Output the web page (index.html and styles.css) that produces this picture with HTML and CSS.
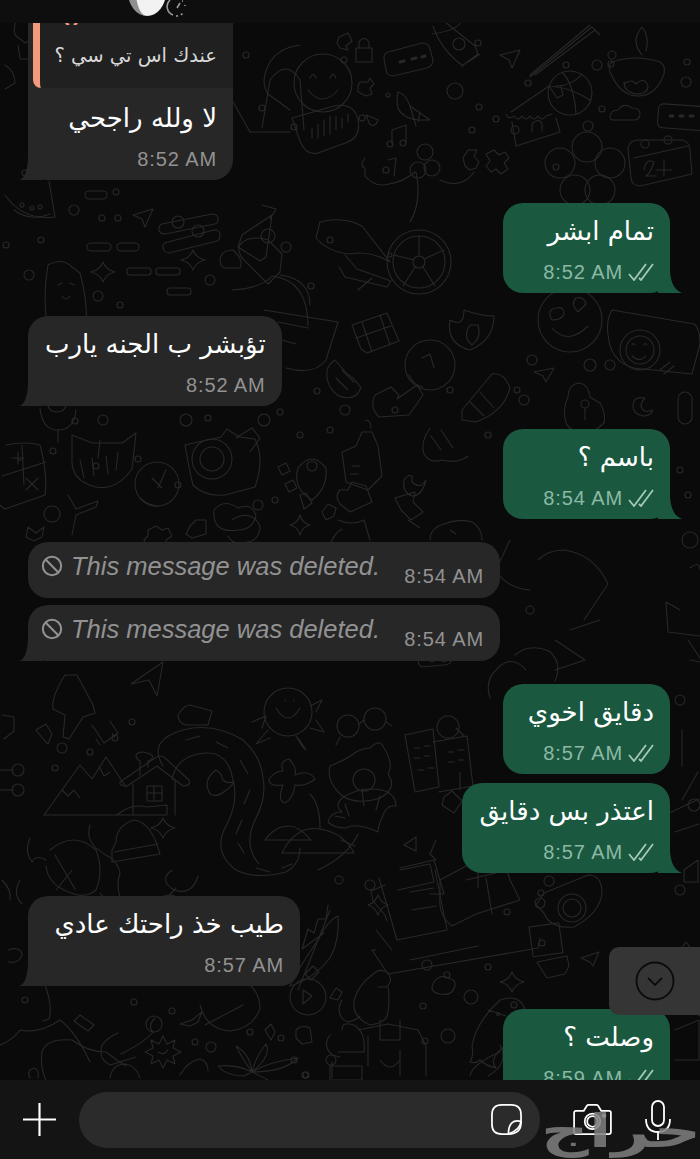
FILE: index.html
```html
<!DOCTYPE html>
<html lang="en">
<head>
    <meta charset="UTF-8">
    <meta name="viewport" content="width=device-width, initial-scale=1.0">
    <title>Chat</title>
    <link rel="stylesheet" href="styles.css">
</head>
<body>
<div class="screen">
    <svg class="wallpaper" viewBox="0 0 700 1159" aria-hidden="true">
        <!-- top row -->
        <circle cx="323" cy="83" r="29"/><path d="M310 78q3-7 6 0M330 78q3-7 6 0M308 90q14 18 30 0"/>
        <path d="M300 45q-32 4-36 35 0 8 4 14l22 16M232 100l18 32h40M262 128l8-48q16-22 30 0l4 50"/>
        <path d="M292 118l42-12q20-4 24 14 3 16-10 22l-30 11q-12 3-18-12z"/><path d="M312 138v-10M318 138v-14M324 136v-16M330 134v-18M336 130v-14M342 128v-10M348 122v-8"/>
        <path d="M340 48l8 2-2-4 6-5-4-8-9 4-2 6zM356 48h16v14l-16 0zM359 48v-6q5-7 10 0v6"/>
        <path d="M388 52l34-9q7 0 8 6l3 11q0 6-6 8l-34 8q-6 0-7-6l-2-11q0-6 4-7z"/><path d="M400 62l4-1M412 59l4-1M422 57l3-1" stroke-width="3"/>
        <path d="M432 34q30-4 32-18M433 26q8 24 30 40M462 66l16-12 -3-8-30-24M468 62l12-8"/><circle cx="459" cy="44" r="6"/>
        <path d="M500 55l20-5-8 18-3-8z"/><path d="M530 75l60-50M535 75l60-45M600 35l-8-8-62 50"/>
        <path d="M612 62q24-8 48 0 6 4 4 12-8 22-26 22-18 0-28-24-2-6 2-10z"/><path d="M642 55q-12-14 0-28 8 10 4 24M624 84q8-6 12 0 8-8 12 2 0 8-12 8-12-2-12-12z"/>
        <circle cx="570" cy="93" r="22"/><path d="M550 86q22 2 40 14M562 72q12 12 14 42M582 74q-10 12-26 12"/>
        <path d="M511 112l38-26 8 12 6-3-2-8M506 114q2 6 8 2 4 6 8 0 4 6 8 0 4 6 8 0 4 6 8 0l6-2M512 122l4 24 44 -14 -4-14"/><circle cx="515" cy="130" r="4"/>
        <path d="M532 132v-8q7-7 10 0v7"/>
        <circle cx="587" cy="147" r="15"/><circle cx="560" cy="163" r="15"/><circle cx="610" cy="163" r="15"/><circle cx="575" cy="190" r="15"/><circle cx="600" cy="190" r="15"/>
        <path d="M628 148q2-8 10-8l44 0q8 2 8 10l2 24-52 12q-8 0-9-8z"/><path d="M634 158l54-12M644 170q2-12 10-8-4 12-8 14h10M664 160v16M656 170h16"/><circle cx="645" cy="144" r="4"/><circle cx="668" cy="140" r="4"/>
        <path d="M610 118q0-8 8-8 6-8 14-2 8 0 8 6t-6 6h-20q-4 0-4-2z"/>
        <rect x="658" y="105" width="50" height="24" rx="5" transform="rotate(4 680 117)"/><path d="M670 116h3M680 116h3M690 116h3" stroke-width="3"/>
        <path d="M398 92q8 2 12 14l20 14-12 0q-16-2-20-12-2-8 0-16z"/><path d="M410 106l6 20M420 112l-2 10"/>
        <path d="M360 82h8l2-4 4 6-4 4 2 6-6 2-8-4 0-6zM366 115l12 5-2 4q-6 4-8-4z"/>
        <path d="M392 130l14-5v18M392 130v14M406 125"/><circle cx="390" cy="144" r="3"/><circle cx="403" cy="143" r="3"/><path d="M388 160l8-2 -2 18"/><circle cx="386" cy="170" r="3"/>
        <path d="M365 158q-6 8 0 10l0 8q10 12 24 8 14-2 26-12M416 172q6 30-6 50M440 180q22 10 34-8"/>
        <circle cx="425" cy="152" r="8"/><circle cx="432" cy="168" r="8"/><circle cx="418" cy="170" r="8"/>
        <path d="M463 158l5-8 9 0 -3 6 5 6-3 6-6 2-5-4z" />
        <path d="M486 154l8-4 5 5 6-3 4 6-5 5 4 6-7 5-5-5-5 3-5-6 4-5z"/>
        <circle cx="455" cy="91" r="8"/><circle cx="479" cy="107" r="3"/><circle cx="528" cy="83" r="3"/><circle cx="478" cy="43" r="3"/><circle cx="496" cy="119" r="3"/><circle cx="472" cy="130" r="3"/>
        <circle cx="294" cy="127" r="3"/><circle cx="362" cy="118" r="3"/><circle cx="388" cy="95" r="2"/><circle cx="344" cy="60" r="3"/><circle cx="246" cy="55" r="3"/><circle cx="262" cy="108" r="3"/>
        <circle cx="566" cy="65" r="3"/><circle cx="597" cy="65" r="5"/><circle cx="611" cy="64" r="3"/><circle cx="612" cy="55" r="4"/><circle cx="686" cy="82" r="5"/><circle cx="687" cy="62" r="3"/><circle cx="602" cy="109" r="3"/><circle cx="588" cy="126" r="5"/><circle cx="556" cy="167" r="3"/>

        <!-- left band under the first bubbles -->
        <path d="M20 15q-8 10-5 20l10 8q10-4 10-14-4-10-15-14zM18 45l2 14h10l0-14"/>
        <path d="M5 65q10 6 10 18l-10 6"/>
        <path d="M5 195q18 26 50 22l-6-36"/><path d="M14 210q16 12 36 4"/>
        <circle cx="22" cy="205" r="2"/><circle cx="32" cy="208" r="2"/><circle cx="40" cy="207" r="2"/>
        <rect x="85" y="191" width="22" height="8" rx="4"/><circle cx="116" cy="192" r="3"/><rect x="22" y="170" width="30" height="6" rx="3"/>
        <circle cx="74" cy="210" r="5"/><circle cx="102" cy="218" r="3"/><circle cx="118" cy="218" r="3"/>
        <path d="M133 215l20-6-8 18-3-8z"/>
        <path d="M162 224l50-10q5 0 6 4t-3 6l-50 10q-5 0-6-4t3-6zM168 242l46-12q6 0 6 5t-3 6l-48 12q-5 0-6-5t5-6z"/><circle cx="178" cy="222" r="6"/><circle cx="198" cy="231" r="6"/>
        <path d="M48 265q14-8 24 2l8 6q8 30 6 50l-38 6q-6-30 0-64zM62 296q4 6 8 0M64 318v14h8v-14M58 268"/>
        <path d="M58 285l4-2M70 283l4 2"/>
        <rect x="87" y="243" width="24" height="8" rx="4"/><rect x="117" y="243" width="22" height="8" rx="4"/><rect x="127" y="268" width="24" height="7" rx="3"/><rect x="156" y="268" width="24" height="7" rx="3"/><rect x="167" y="288" width="24" height="7" rx="3"/>
        <path d="M103 262q3 8 12 10-9 2-12 10-3-8-12-10 9-2 12-10zM193 250q3 8 12 10-9 2-12 10-3-8-12-10 9-2 12-10zM233 250q-12 0-13 10 0 8 6 8h14q4-8-7-18z"/>
        <path d="M268 240l14 14 -2 18q-6 6-12 12-16-16-26-26-8-12 4-18 12-4 22 0z"/>
        <path d="M232 290q30-2 40-14 36 4 36 50M280 275q30 4 30 30"/>
        <path d="M264 310l74 12-12 38q-12 16-40 8"/><path d="M278 322l30 6M282 340l14 4"/>
        <path d="M272 215l-30 20 -4 12 22 14 6-4zM262 205l14 4-6 10"/><circle cx="268" cy="236" r="7"/>
        <path d="M320 222q24-6 42 4l28 36q-20-12-40-8-22-2-34-16z"/><path d="M345 255l12 14 34 12 -4 6-42-10-6 -10M372 278l-14 12"/>
        <circle cx="419" cy="262" r="32"/><circle cx="419" cy="262" r="26"/><circle cx="419" cy="262" r="6"/><path d="M419 236v20M394 255l20 5M403 286l12-19M435 286l-12-19M444 250l-20 9"/>
        <circle cx="390" cy="255" r="2"/><circle cx="330" cy="240" r="3"/><circle cx="311" cy="286" r="3"/><circle cx="286" cy="247" r="5"/><circle cx="210" cy="280" r="5"/><circle cx="98" cy="296" r="5"/><circle cx="120" cy="305" r="3"/><circle cx="41" cy="240" r="3"/><circle cx="29" cy="275" r="5"/><circle cx="6" cy="245" r="3"/>

        <!-- middle band -->
        <path d="M352 325l35-12 12 28-32 12-6-4zM362 322l10 30M380 315l10 30M356 338l35-12"/>
        <path d="M450 320q14 8 14-10 16 6 30 6 0 24-24 34-24-6-20-30z"/><path d="M470 325q-8 12 2 20 10-8 6-20z"/>
        <circle cx="430" cy="365" r="25"/><path d="M422 358l8-4 4 14"/><path d="M409 375q4 10 14 12"/>
        <path d="M335 360q-10 6-8 18 2 12 12 18 16 6 22-8-8-12-14-14z"/><path d="M342 370l12 12M336 378l12 12"/>
        <path d="M375 395l16-8 8 8 -2 4 20-14 6 10-14 20-30 2q-10-10-4-22z"/>
        <path d="M462 410l30-36q12-2 18 14-6 24-34 34l-14-2z"/><path d="M480 392l14 16M470 402l14 14"/>
        <circle cx="570" cy="320" r="32"/><path d="M552 320q-6-10 4-12 8-2 8 6-2 6-12 6zM578 312q-8-8-2-14 8-2 10 6zM552 328q16 18 36-2"/>
        <path d="M612 310l82 14q6 4 6 20l-8 30-58 -6q-24-6-26-34-2-14 4-24z"/><circle cx="640" cy="350" r="20"/><circle cx="640" cy="350" r="14"/><path d="M632 345q1-3 3 0M644 345q1-3 3 0M632 356q8 7 14 0M660 370l10-8M664 374l10-8"/>
        <path d="M568 397q0-12 10-14 10 0 12 14l10 6q6 10 4 20l-12 10q-20 2-26-10-4-14 2-26zM585 408v12"/><circle cx="585" cy="404" r="4"/>
        <path d="M645 398q-12-2-12 8 0 8 10 10 8 0 10-6-10 4-12-4 0-4 4-8z"/><rect x="678" y="392" width="14" height="32" rx="7"/>
        <path d="M534 372l20-4-8 14-3-6z"/><path d="M100 440l-2 18M22 460l-4 0"/>
        <path d="M40 408q2 22 18 22t18-20M58 430v12"/><rect x="48" y="398" width="18" height="14" rx="9"/>
        <path d="M6 445q20-4 34 0 8 30 5 50l-40 14-8-6M22 445l2 40M2 476l44-14M18 452v12M12 458h12M26 478l12 12M38 478l-12 12"/>
        <path d="M72 435l20 8h30l14-10 -4 36q-16 22-36 18-26-6-24-30zM80 460l4 18M92 458l2 18M106 456l2 18M118 452l-2 18"/><circle cx="96" cy="466" r="3"/>
        <path d="M185 445l36-8 6-8 12 8 16 2q10 20 0 48l-30 8q-20 2-32-10-4-16-8-40zM236 438l16-10 8 10-10 14"/><circle cx="212" cy="459" r="20"/><circle cx="212" cy="459" r="12"/>
        <circle cx="157" cy="484" r="22"/><path d="M158 488l8-18M152 478l10 10"/><path d="M140 498q8 8 18 8"/>
        <path d="M298 468q14-18 28 0 2 20-14 32-20-12-14-32z"/><circle cx="312" cy="466" r="5"/>
        <path d="M362 432l10 0 6 14 4 30-14 14-22-8-4-30 14-6z"/><path d="M352 466l8 0M350 474l8 0"/>
        <path d="M365 420q6 0 6 8"/>
        <path d="M278 467l8-4 4 8-8 4z M285 484l8-4 4 8-8 4z"/>
        <path d="M412 482q8 8 14 -2-4 16-14 16-10-4-8-16 4-6 8-4z"/><path d="M322 512l6-8 8 4 -2 8 -8 4z"/>
        <path d="M430 428q-10 14-6 26 6 10 18 6 16 4 26-4M441 430l12 18M431 436l10 14"/>
        <path d="M214 510q10-12 24-2 14-6 18 8-4 14-18 14-26 4-24-20z"/><path d="M232 520q12-8 22-2 12 10 0 22-20 8-26-4"/>
        <path d="M68 495l8 14 22-8-2 6-20 8-4 20M52 506a8 8 0 1 0 0.1 0"/><path d="M28 527l8 6 8-6-2 10-8 4-8-4z"/>
        <path d="M148 530l8-4 6 4 6-2 4 8-6 4 2 8-8 2-6-4-6 2-4-8 4-4z"/>
        <path d="M196 520l10 0 0 14-14 4-6-4 4-8 6-6zM300 495l6 -2 6 10-8 6zM300 515q2 8 10 10-8 2-10 10-2-8-10-10 8-2 10-10z"/>
        <path d="M340 490q-6 6 0 14l10 8 22-10 -6-16-14-4-4 8z"/><path d="M338 520q14 6 26 0l6 20M330 545q4-12 12-16"/>
        <path d="M395 498l20-6-2 10 10 10-12 8 -10 -10z"/><path d="M408 520l12 8"/>
        <path d="M430 540q0-12 14-16 14-6 28-2 10 6 10 18"/><path d="M450 530l6 4"/>
        <circle cx="178" cy="485" r="3"/><circle cx="258" cy="505" r="5"/><circle cx="275" cy="500" r="3"/><circle cx="300" cy="435" r="3"/><circle cx="345" cy="410" r="5"/><circle cx="330" cy="430" r="3"/><circle cx="317" cy="391" r="3"/><circle cx="264" cy="420" r="6"/><circle cx="103" cy="420" r="5"/><circle cx="75" cy="421" r="3"/><circle cx="53" cy="451" r="3"/><circle cx="138" cy="459" r="3"/><circle cx="186" cy="420" r="6"/><circle cx="208" cy="418" r="3"/><circle cx="280" cy="412" r="3"/><circle cx="395" cy="410" r="3"/><circle cx="450" cy="390" r="3"/><circle cx="488" cy="435" r="3"/><circle cx="524" cy="400" r="5"/><circle cx="532" cy="360" r="5"/><circle cx="610" cy="365" r="5"/><circle cx="590" cy="365" r="6"/><circle cx="517" cy="390" r="3"/><circle cx="680" cy="470" r="3"/><circle cx="688" cy="495" r="3"/>

        <!-- lower band -->
        <path d="M420 655q2-14 14-14 14 0 18 16 0 8-8 8l-22 2q-6-2-2-12z"/>
        <path d="M432 656a3 3 0 1 0 0.1 0M444 656a3 3 0 1 0 0.1 0M490 698q-6-18 8-30 14-14 28 2"/><path d="M448 716a11 11 0 1 0 0.1 0M456 728l8 8"/>
        <path d="M405 735l28-6 6 58-24 5zM433 742l34-6 6 50-34 6M414 748h6M424 746h6M414 758h6M424 756h6M418 770h6M428 768h6M448 752h6M458 750h6M448 762h6M458 760h6M460 772v18"/>
        <path d="M444 797l8-6 10 10-8 12-12-8z"/><path d="M404 845l12-8v14zM436 840l-6 14 6 6"/><path d="M400 868l34-8 10 34-14 0"/>
        <path d="M65 675q-14 22-12 34l12 6-2 22 6 2 14-22 12-4-2-8-16-30z"/>
        <path d="M92 725l12 18 14-10-8-12M96 739l4 6M112 733l3 5"/><path d="M131 684l32-22-6 34-8-16z"/><path d="M36 730l10-6 6 10-4 10 -4-4z"/>
        <circle cx="62" cy="748" r="5"/><circle cx="90" cy="752" r="3"/><circle cx="55" cy="768" r="3"/><circle cx="132" cy="722" r="3"/><circle cx="115" cy="738" r="3"/>
        <circle cx="288" cy="712" r="24"/><path d="M276 708q12 20 24 0M285 700v1M294 700v1M252 722l14-6-4 12M310 706l12-6-6 12M316 720l8 12-14-4M298 738l8 12-4-4-6-10M268 730l-12 14 14-6"/>
        <circle cx="348" cy="726" r="11"/><circle cx="375" cy="719" r="11"/><path d="M359 724l5-4M340 737l-4 8M386 722l6 4"/>
        <path d="M370 748q10-10 14 0 10 16 4 26 10 14-8 24-26 8-40-4-14-14-10-28 16-6 26-14 8-4 14-4z"/><circle cx="364" cy="780" r="11"/>
        <path d="M190 705l22 6-4 14h-22q-8-2-8-10 6-10 12-10z"/>
        <path d="M44 815l36-50 12 14 14-22 20 30M62 790l6 6 6-6 6 8M100 768l4 8 6-4"/><path d="M44 815h122"/>
        <path d="M120 782l35-24q5-4 10 0l24 22q2 6-6 6l-26-20-30 20q-8 0-7-4z"/><path d="M133 784v30M175 780v35"/><rect x="147" y="786" width="15" height="15"/><path d="M154 786v15M147 793h15"/>
        <path d="M140 775v-14q-4-2-4-6 4-6 16 0 2 4-4 6v6"/>
        <path d="M117 815q14-12 30-8l20-2 0 10"/>
        <path d="M163 766q-16-26 20-36 30-8 60 10 18 16 20 38 4 20-8 42-12 26 4 44M172 780q4-22 26-26 28-6 34 22 8 24-6 50-14 26 10 44 20 10 50 2 14-8 14-24"/>
        <path d="M186 740l14-4M216 742l12 6M240 760l8 14M250 790l-6 14M242 820l-6 14M238 843l6 10M256 868l14 4M282 868l10-4"/>
        <path d="M216 770q-14 10-6 24 8 4 16-4 4-2 8-8-10 2-12-4 0-4-6-8z"/>
        <path d="M283 771q-4-10 6 -12 8 8 6 16 14-6 20 4-10 8-20 6-2 14-10 18-8-2-2-18-14 2-14-6 6-8 14-8z"/>
        <path d="M265 840q10-14 24-14 10 0 22 14zM282 853q14-28 38-24 24 4 34 24zM320 828q0-24-10-34"/>
        <path d="M342 812q-8-6 0-14 18-12 40-8 14 4 14 16-10-2-14 12-4 8-4 14-22-10-32-4-12 0-18-6 2-10 14-10z"/><path d="M345 804l4 12M362 790l2 16M380 796l-4 14"/>
        <path d="M335 816l10 2M341 840l14 6"/>
        <path d="M134 820q-18 6-18 22l-4 8v12l48 -8 -4-12q-8-20-22-22zM114 852l44-8"/>
        <path d="M30 838q-6 14 2 24 4-8 14-2M50 850q24-20 46 0 8 20 0 40-10 8-22 4-26-8-28-28M55 855l20 34M72 870l-16 20"/><path d="M90 825q-6 18 16 30 12 6 14 18-4 12 0 24 -16 4-20-4"/>
        <path d="M172 870q-14 10 2 20 18 6 24-14"/><path d="M176 888q-8 8-10 14 4 0 8-2-2 8 0 12"/>
        <path d="M318 870q30-14 40-36"/><path d="M163 818q3 8 12 10-9 2-12 10-3-8-12-10 9-2 12-10z"/>
        <path d="M2 715l12 2 0 14-10 8M0 770h14M0 790h14"/><circle cx="18" cy="770" r="6"/><circle cx="18" cy="790" r="6"/>
        <path d="M318 940q-22 32-28 46 22-6 40-28 10-18 8-42-10 4-20 24z"/><path d="M330 910l-32 80M328 905l-2 14 -8 0 -4 14-6-4-6 20 22-16"/>
        <path d="M385 885l-14 6 2 10 12 14 2 6M400 870l30 -6 4 18 -36 8M435 870l12 60-50 10-18-62"/><path d="M410 892l24-4M412 910l24-4M410 960l68-14"/>
        <path d="M392 950l-16-20M376 950l-4 0 16 24 150-26 2-10"/>
        <path d="M440 880q30-16 44-24 18-6 26 24l10 20-44 14-24 12q-14-10-12-30 0-10 0-16zM466 880l34-8M486 878l6 36M478 868v20"/>
        <path d="M536 905l8 -12 44-18q14 0 14 18-2 20-28 34-24 2-30-14z"/><circle cx="572" cy="908" r="14"/><circle cx="572" cy="908" r="9"/>
        <path d="M531 925h30v30h-30z" transform="rotate(-8 545 940)"/><path d="M537 962l30-6 2 10 -4 8-18 4z"/>
        <path d="M581 958l18-6-6 14-3-4z"/>
        <circle cx="507" cy="912" r="3"/><circle cx="549" cy="881" r="5"/><circle cx="540" cy="903" r="5"/><circle cx="541" cy="893" r="3"/><circle cx="542" cy="943" r="3"/>
        <path d="M378 895q3 8 10 10-7 2-10 10-3-8-10-10 7-2 10-10zM512 972q3 8 12 10-9 2-12 10-3-8-12-10 9-2 12-10z"/>
        <path d="M372 975q-14 10-18 26-2 16 16 24 18-2 18-14 2-10 0-24M372 975q8-8 16 -2 6 8-2 14l-8 0"/>
        <path d="M358 1030l30 -6 30 6 8 16 0 30M380 1020v20h20v-20M368 1066v-30M400 1050v26M380 1060q10 14 20 0"/>
        <path d="M342 1000q-6 10 0 18t18-2M342 1030q0 -10 14-4 10 8 8 26h-26"/><rect x="330" y="1066" width="32" height="14"/>
        <circle cx="308" cy="997" r="18"/><path d="M303 990l9 6-9 8z"/><circle cx="339" cy="880" r="4"/><circle cx="370" cy="885" r="5"/>
        <path d="M313 966l6 6-8 8-6-6zM336 988l-6 10 8 2 4-8z"/><path d="M434 982q6-8 14-4 10 2 6 10-2 8-14 6t-6-12z"/>
        <path d="M500 1000q12-4 18 0 10 6 4 18-6 20-24 34-8 10-2 16-10-2-16 -8-4 4-10 2 4-6 2-16 4-24 28-46zM488 1010l18 6"/><circle cx="498" cy="1014" r="1.5"/>
        <path d="M470 1076q2-12 30-24M500 1045q10 18-12 31"/>
        <circle cx="427" cy="965" r="5"/><circle cx="471" cy="997" r="7"/><circle cx="447" cy="975" r="3"/><circle cx="423" cy="1006" r="3"/><circle cx="448" cy="1036" r="7"/><circle cx="425" cy="1041" r="3"/><circle cx="294" cy="1060" r="3"/><circle cx="305" cy="1075" r="3"/><circle cx="488" cy="967" r="3"/><circle cx="514" cy="1005" r="3"/>

        <!-- bottom left corner -->
        <path d="M45 985q8 22 4 34l-6 2M60 1020q-20 14-40 10-10 14-30 18M60 1020q16 12 30 42M72 1040q-26-2-30 12-2 16 4 28M72 1040q16 12 34 12 10 8 20 14"/>
        <path d="M118 1033q-10 4-16 12-4 14 8 20l26-8"/><path d="M155 1018q-8 8-2 14 -8 10-32 22"/><circle cx="154" cy="1024" r="8"/>
        <path d="M80 1015l14 10-6 6-14-10z"/>
        <path d="M200 1005q6 24 30 26 22-2 30-22 0-16-12-26M180 1024l12-4 10-8 -4 10-8 4zM205 1025l38-20"/>
        <circle cx="134" cy="1002" r="3"/><circle cx="172" cy="1011" r="3"/><circle cx="195" cy="1042" r="3"/><circle cx="211" cy="1047" r="5"/><circle cx="250" cy="1032" r="3"/><circle cx="281" cy="1038" r="3"/><circle cx="306" cy="1075" r="3"/><circle cx="25" cy="1000" r="3"/>
        <path d="M163 1036l4 8 8-4-2 8 8 4-8 4 2 8-8-4-4 8-4-8-8 4 2-8-8-4 8-4-2-8 8 4z"/><path d="M158 1052q6 4 10-2"/>
        <path d="M180 1075q8-14 20-16 8 2 8 12"/><path d="M110 1078q2-14 16-14 10 2 14 14"/>
        <path d="M252 1072q-16-8-34-6 8 10 26 10zM252 1072q-10-14-16-26 14 8 16 26zM252 1072q4-16 14-28 6 12-14 28zM252 1072q16-10 46-14-14 14-46 14zM268 1080l-16-8"/>
        <path d="M265 1030l6-6 4 8-4 8zM296 1030q6-6 14-2l2 14-10 2-6-6z"/><path d="M330 1035q-8 10 2 20l8 2M332 1062v16"/><circle cx="331" cy="1060" r="5"/>
        <path d="M30 1078q-4-8 4-10 6 2 4 10"/>
        <path d="M2 880q10 10 8 20M20 880q-8 14 2 24M180 900q-10-10-22 0"/>
        <path d="M8 950q12-4 14 4-2 10-14 8M40 950l16 10-10 12"/>
        <path d="M604 1040q10-10 24-4 16 0 18 14l-2 30h-38zM655 1050l12 0"/><path d="M606 1060q10-6 40 0M675 1030l24 -10v40h-24"/>
        <path d="M682 800l16-28M665 815l34-16M675 832l24-8"/><circle cx="694" cy="805" r="6"/><circle cx="680" cy="890" r="5"/><path d="M684 870l14-10v22h-14z"/>
        <path d="M680 1000l20-14v30zM672 960l14-18 14 18-14 10z"/><path d="M690 568q10-8 10 2M680 610l-14-8 2 30 32 4M688 640l12 18"/><circle cx="690" cy="540" r="8"/><circle cx="680" cy="700" r="5"/><path d="M690 660l10 2M682 730v36"/>
        <path d="M538 560q10-10 26-10 30 4 44 34l-24 36"/><path d="M510 540l-14 30q10 18 34 20M555 640l30 20 -30 10M600 620l-30 10"/><path d="M515 655q14-12 34-4 14 12 6 30"/><circle cx="530" cy="610" r="4"/>
    </svg>

    <div class="top-bar">
        <span class="avatar"></span>
        <svg class="status-ring" viewBox="0 0 28 22"><path d="M8 0a9 9 0 0 0 3 15"/><path d="M14 16q5 0 8-4M23 6v-1M20 1h1" stroke-dasharray="2 3"/><path d="M15 8l3-5"/></svg>
    </div>

    <main class="chat">
        <div class="msg in first">
            <div class="bubble tail reply-bubble">
                <div class="quote">
                    <span class="quote-name">You</span>
                    <span class="quote-text" dir="rtl">عندك اس تي سي ؟</span>
                </div>
                <p class="text" dir="rtl">لا ولله راجحي</p>
                <span class="meta"><span class="time">8:52 AM</span></span>
            </div>
        </div>

        <div class="msg out">
            <div class="bubble tail">
                <p class="text" dir="rtl">تمام ابشر</p>
                <span class="meta"><span class="time">8:52 AM</span>
                    <svg class="ticks" viewBox="0 0 26 18"><path d="M1 11l5 6L18 1M11 15l2 2L25 1"/></svg></span>
            </div>
        </div>

        <div class="msg in">
            <div class="bubble tail">
                <p class="text" dir="rtl">تؤبشر ب الجنه يارب</p>
                <span class="meta"><span class="time">8:52 AM</span></span>
            </div>
        </div>

        <div class="msg out">
            <div class="bubble tail">
                <p class="text" dir="rtl">باسم ؟</p>
                <span class="meta"><span class="time">8:54 AM</span>
                    <svg class="ticks" viewBox="0 0 26 18"><path d="M1 11l5 6L18 1M11 15l2 2L25 1"/></svg></span>
            </div>
        </div>

        <div class="msg in">
            <div class="bubble deleted">
                <svg class="ban" viewBox="0 0 24 24"><circle cx="12" cy="12" r="10"/><path d="M5 5l14 14"/></svg>
                <em class="deleted-text">This message was deleted.</em>
                <span class="time">8:54 AM</span>
            </div>
        </div>
        <div class="msg in near">
            <div class="bubble deleted tail">
                <svg class="ban" viewBox="0 0 24 24"><circle cx="12" cy="12" r="10"/><path d="M5 5l14 14"/></svg>
                <em class="deleted-text">This message was deleted.</em>
                <span class="time">8:54 AM</span>
            </div>
        </div>

        <div class="msg out">
            <div class="bubble">
                <p class="text" dir="rtl">دقايق اخوي</p>
                <span class="meta"><span class="time">8:57 AM</span>
                    <svg class="ticks" viewBox="0 0 26 18"><path d="M1 11l5 6L18 1M11 15l2 2L25 1"/></svg></span>
            </div>
        </div>
        <div class="msg out near">
            <div class="bubble tail">
                <p class="text" dir="rtl">اعتذر بس دقايق</p>
                <span class="meta"><span class="time">8:57 AM</span>
                    <svg class="ticks" viewBox="0 0 26 18"><path d="M1 11l5 6L18 1M11 15l2 2L25 1"/></svg></span>
            </div>
        </div>

        <div class="msg in">
            <div class="bubble tail wide">
                <p class="text" dir="rtl">طيب خذ راحتك عادي</p>
                <span class="meta"><span class="time">8:57 AM</span></span>
            </div>
        </div>

        <div class="msg out">
            <div class="bubble tail">
                <p class="text" dir="rtl">وصلت ؟</p>
                <span class="meta"><span class="time">8:59 AM</span>
                    <svg class="ticks" viewBox="0 0 26 18"><path d="M1 11l5 6L18 1M11 15l2 2L25 1"/></svg></span>
            </div>
        </div>

        <div class="scroll-down">
            <svg viewBox="0 0 40 40"><circle cx="20" cy="20" r="18.5"/><path d="M13 17l7 7 7-7"/></svg>
        </div>
    </main>

    <footer class="composer">
        <svg class="plus" viewBox="0 0 34 34"><path d="M17 0v34M0 17h34"/></svg>
        <div class="input">
            <svg class="sticker" viewBox="0 0 32 32"><path d="M11 1h10q10 0 10 10v8Q31 31 18 31h-7Q1 31 1 21V11Q1 1 11 1z"/><path d="M31 18q-13-3-13 13M31 18q-1 9-13 13"/></svg>
        </div>
        <svg class="camera" viewBox="0 0 40 32"><path d="M3 7h8l3-5q1-1 2-1h8q1 0 2 1l3 5h8q2 0 2 2v20q0 2-2 2H3q-2 0-2-2V9q0-2 2-2z"/><circle cx="20" cy="18" r="8"/><circle cx="20" cy="18" r="5.5"/><circle cx="32" cy="12" r="1.3"/></svg>
        <svg class="mic" viewBox="0 0 26 40"><rect x="7" y="1" width="12" height="25" rx="6"/><path d="M1 19q0 13 12 13t12-13M13 32v8"/></svg>
        <span class="watermark" dir="rtl">حراج</span>
    </footer>
</div>
</body>
</html>
```

FILE: styles.css
```css
* {
    box-sizing: border-box;
}

body {
    margin: 0;
    background-color: #0a0a0a;
    font-family: "Liberation Sans", sans-serif;
}

.screen {
    position: relative;
    display: flex;
    flex-direction: column;
    width: 700px;
    height: 1159px;
    overflow: hidden;
}

.wallpaper {
    position: absolute;
    top: 0;
    left: 0;
    width: 700px;
    height: 1159px;
    fill: none;
    stroke: #282828;
    stroke-width: 1.1;
    stroke-linecap: round;
    stroke-linejoin: round;
}

.top-bar {
    position: relative;
    flex: 0 0 23px;
    background-color: #0e0e0e;
    overflow: hidden;
}

.avatar {
    position: absolute;
    top: -32px;
    left: 128px;
    width: 38px;
    height: 48px;
    border-radius: 50%;
    background-color: #f2f2f2;
    border-left: 8px solid #8f8f8f;
}

.status-ring {
    position: absolute;
    top: 0;
    left: 162px;
    width: 28px;
    height: 22px;
    fill: none;
    stroke: #9a9a9a;
    stroke-width: 1.6;
}

.chat {
    position: relative;
    flex: 1;
    display: flex;
    flex-direction: column;
    overflow: hidden;
}

.msg {
    display: flex;
    flex: none;
    margin-top: 23px;
}

.msg.near {
    margin-top: 9px;
}

.msg.in {
    justify-content: flex-start;
    padding-left: 28px;
}

.msg.out {
    justify-content: flex-end;
    padding-right: 30px;
}

.msg.in.near {
    margin-top: 7px;
}

.msg.first {
    margin-top: -20px;
}

.bubble {
    position: relative;
    display: flex;
    flex-direction: column;
    align-items: flex-end;
    height: 90px;
    padding: 10px 16px 9px 17px;
    border-radius: 20px;
    color: #fff;
}

.in .bubble {
    background-color: #272727;
}

.out .bubble {
    min-width: 167px;
    background-color: #1a5840;
}

.bubble.wide {
    min-width: 272px;
}

.bubble.tail::after {
    content: "";
    position: absolute;
    bottom: 0;
    width: 24px;
    height: 22px;
}

.in .bubble.tail::after {
    left: -9px;
    background-color: #272727;
    clip-path: path("M24 0V22H0Q8 20 9 0Z");
}

.out .bubble.tail::after {
    right: -12px;
    background-color: #1a5840;
    clip-path: path("M0 0V22H24Q13 18 12 0Z");
}

.text {
    margin: 0;
    font-family: "DejaVu Sans", sans-serif;
    font-size: 26px;
    line-height: 36px;
    white-space: nowrap;
}

.meta {
    display: flex;
    align-items: center;
    gap: 5px;
    margin-top: auto;
}

.time {
    font-size: 20px;
    line-height: 24px;
    letter-spacing: 0.9px;
    color: #929292;
    white-space: nowrap;
}

.out .time {
    color: #8cb9a4;
}

.ticks {
    width: 26px;
    height: 18px;
    fill: none;
    stroke: #a5c8b8;
    stroke-width: 1.8;
}

.reply-bubble {
    width: 205px;
    height: 177px;
    padding-top: 0;
    align-items: stretch;
    text-align: right;
}

.reply-bubble .text {
    margin-top: 12px;
}

.reply-bubble .meta {
    justify-content: flex-end;
}

.quote {
    display: flex;
    flex-direction: column;
    height: 85px;
    margin: 0 -16px 0 -12px;
    padding: 16px 16px 0 12px;
    border-left: 7px solid #f29a7c;
    border-radius: 0 0 0 8px;
    background-color: #202020;
}

.quote-name {
    height: 8px;
    margin: -2px 0 0 12px;
    font-size: 22px;
    font-weight: bold;
    text-align: left;
    color: #f29a7c;
    overflow: hidden;
}

.quote-text {
    margin-top: 17px;
    font-family: "DejaVu Sans", sans-serif;
    font-size: 19.5px;
    line-height: 28px;
    color: #d8d8d8;
    white-space: nowrap;
}

.bubble.deleted {
    flex-direction: row;
    align-items: flex-start;
    width: 472px;
    height: 56px;
    padding: 9px 16px 0 13px;
}

.ban {
    flex: none;
    width: 22px;
    height: 22px;
    margin-top: 4px;
    fill: none;
    stroke: #929292;
    stroke-width: 2.2;
}

.deleted-text {
    margin-left: 8px;
    font-size: 25.5px;
    line-height: 30px;
    color: #929292;
    white-space: nowrap;
}

.bubble.deleted .time {
    margin-left: auto;
    margin-top: 13px;
}

.scroll-down {
    position: absolute;
    top: 924px;
    right: 0;
    display: flex;
    align-items: center;
    justify-content: center;
    width: 91px;
    height: 68px;
    border-radius: 10px 0 0 10px;
    background-color: #353535;
}

.scroll-down svg {
    width: 40px;
    height: 40px;
    fill: none;
    stroke: #0b0b0b;
    stroke-width: 1.8;
}

.composer {
    position: relative;
    flex: 0 0 79px;
    display: flex;
    align-items: center;
    padding: 0 30px 0 23px;
    background-color: #141414;
    fill: none;
    stroke: #fff;
}

.plus {
    flex: none;
    width: 33px;
    height: 33px;
    stroke-width: 2.2;
}

.input {
    flex: none;
    display: flex;
    align-items: center;
    justify-content: flex-end;
    width: 461px;
    height: 56px;
    margin-left: 23px;
    padding-right: 18px;
    border-radius: 28px;
    background-color: #2b2b2b;
}

.sticker {
    width: 31px;
    height: 31px;
    stroke-width: 1.8;
}

.camera {
    flex: none;
    width: 39px;
    height: 31px;
    margin-left: 33px;
    stroke-width: 1.8;
}

.mic {
    flex: none;
    width: 26px;
    height: 40px;
    margin-left: 33px;
    stroke-width: 1.8;
}

.watermark {
    position: absolute;
    top: 26px;
    left: 548px;
    width: 146px;
    font-family: "DejaVu Sans", sans-serif;
    font-size: 46px;
    font-weight: bold;
    line-height: 50px;
    text-align: center;
    color: #7f7f7f;
    transform: scaleX(1.45);
    opacity: 0.85;
}
```
